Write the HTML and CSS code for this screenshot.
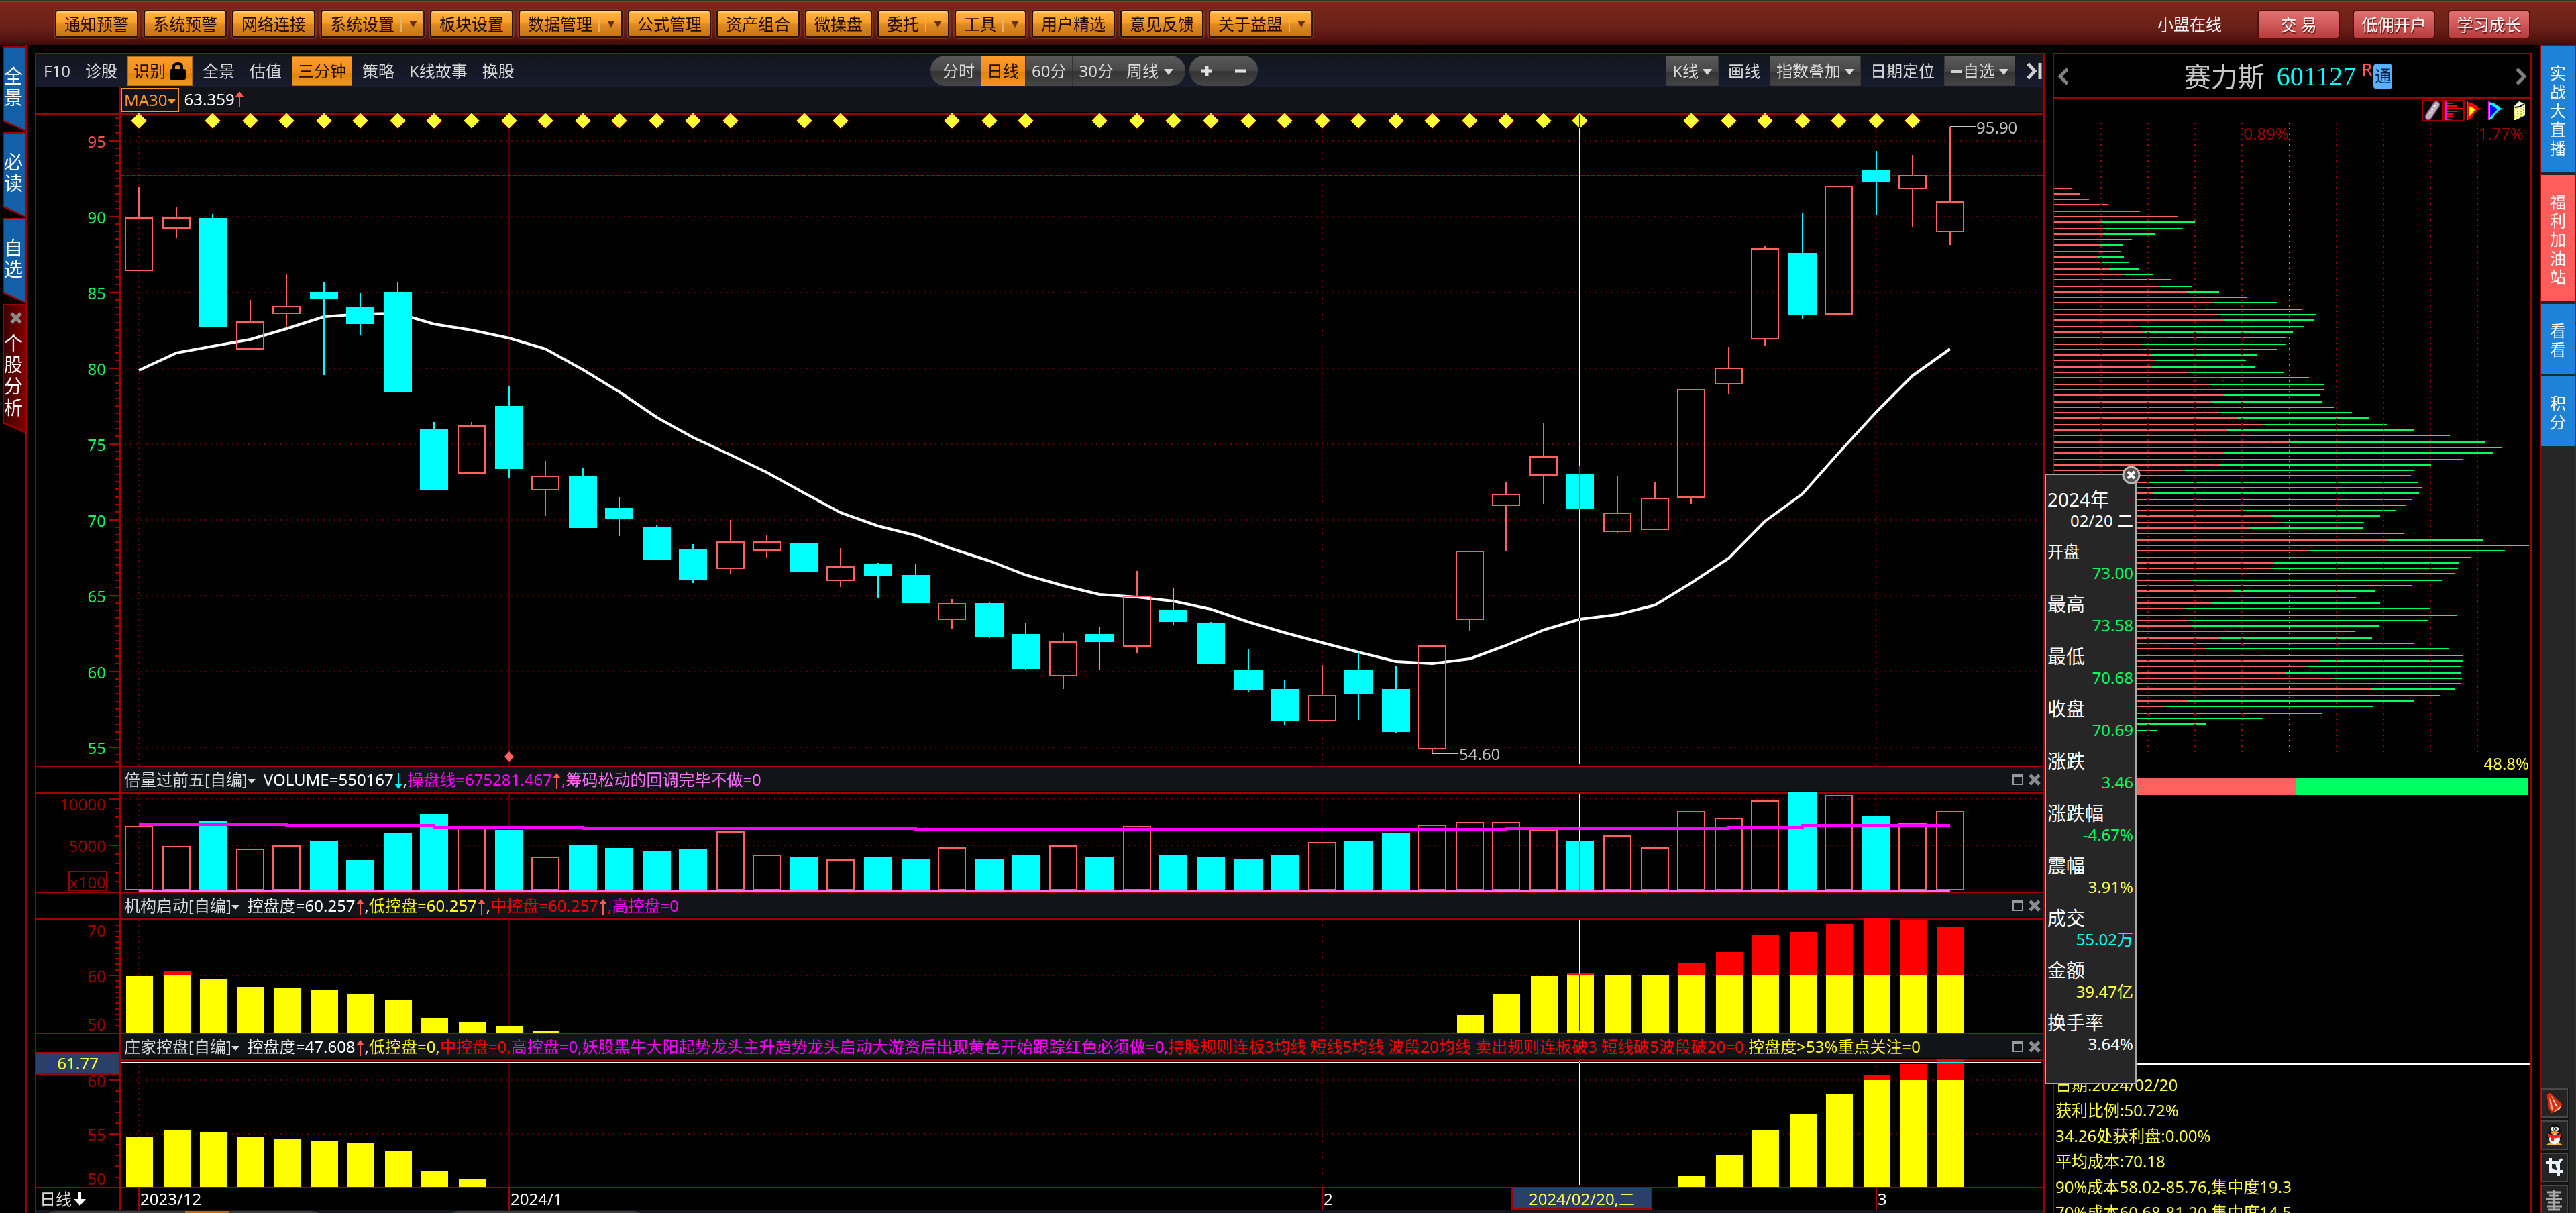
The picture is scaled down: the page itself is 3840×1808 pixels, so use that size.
FILE: index.html
```html
<!DOCTYPE html>
<html lang="zh-CN">
<head>
<meta charset="utf-8">
<title>赛力斯 601127</title>
<link rel="stylesheet" href="styles.css">
</head>
<body>
<svg class="defs" width="0" height="0" aria-hidden="true">
  <symbol id="a-up" viewBox="0 0 14 26"><path d="M7 1L13 9H8V25H6V9H1z"/></symbol>
  <symbol id="a-down" viewBox="0 0 14 26"><path d="M7 25L13 17H8V1H6V17H1z"/></symbol>
  <symbol id="a-close" viewBox="0 0 18 18"><path d="M2 2L16 16M16 2L2 16" stroke="#8c8c8c" stroke-width="5"/></symbol>
</svg>
<header class="topbar">
  <nav class="menu">
    <button class="menu-btn">通知预警</button>
    <button class="menu-btn">系统预警</button>
    <button class="menu-btn">网络连接</button>
    <button class="menu-btn">系统设置<i class="split"></i></button>
    <button class="menu-btn">板块设置</button>
    <button class="menu-btn">数据管理<i class="split"></i></button>
    <button class="menu-btn">公式管理</button>
    <button class="menu-btn">资产组合</button>
    <button class="menu-btn">微操盘</button>
    <button class="menu-btn">委托<i class="split"></i></button>
    <button class="menu-btn">工具<i class="split"></i></button>
    <button class="menu-btn">用户精选</button>
    <button class="menu-btn">意见反馈</button>
    <button class="menu-btn">关于益盟<i class="split"></i></button>
  </nav>
  <div class="account">
    <a class="online" href="#">小盟在线</a>
    <button class="red-btn">交 易</button>
    <button class="red-btn">低佣开户</button>
    <button class="red-btn">学习成长</button>
  </div>
</header>

<div class="workspace">
  <nav class="left-tabs">
    <button class="ltab"><span>全景</span></button>
    <button class="ltab"><span>必读</span></button>
    <button class="ltab"><span>自选</span></button>
    <button class="ltab active">
      <svg class="x"><use href="#a-close"/></svg>
      <span>个股分析</span>
    </button>
  </nav>

  <main class="chart-panel">
    <div class="toolbar">
      <div class="tools">
        <button class="tool">F10</button>
        <button class="tool">诊股</button>
        <button class="tool on">识别<svg class="lock" viewBox="0 0 26 28" width="26" height="28"><path d="M7 11V7q0-4 6-4t6 4v4" fill="none" stroke="#000" stroke-width="4"/><rect x="1" y="11" width="24" height="16" rx="3"/></svg></button>
        <button class="tool">全景</button>
        <button class="tool">估值</button>
        <button class="tool on">三分钟</button>
        <button class="tool">策略</button>
        <button class="tool">K线故事</button>
        <button class="tool">换股</button>
      </div>
      <div class="periods">
        <div class="pill">
          <button class="seg first">分时</button>
          <button class="seg on">日线</button>
          <button class="seg">60分</button>
          <button class="seg">30分</button>
          <button class="seg last">周线<i class="tri"></i></button>
        </div>
        <div class="pill zoom">
          <button class="sign" aria-label="放大"><svg viewBox="0 0 20 20" width="20" height="20"><path d="M2 10H18M10 2V18"/></svg></button>
          <button class="sign" aria-label="缩小"><svg viewBox="0 0 20 20" width="20" height="20"><path d="M2 10H18"/></svg></button>
        </div>
      </div>
      <div class="tools right">
        <button class="drop">K线<i class="tri"></i></button>
        <button class="tool">画线</button>
        <button class="drop">指数叠加<i class="tri"></i></button>
        <button class="tool">日期定位</button>
        <button class="drop"><i class="dash"></i>自选<i class="tri"></i></button>
        <button class="skip" aria-label="收起"><svg viewBox="0 0 24 26" width="24" height="26"><path d="M3 2L13 13L3 24M21 1V25"/></svg></button>
      </div>
    </div>

    <div class="row info-row">
      <div class="axis-cell"></div>
      <div class="strip">
        <button class="ma">MA30<i class="tri"></i></button>
        <span class="w">63.359</span><svg class="arr up"><use href="#a-up"/></svg>
      </div>
    </div>
    <section class="plot price"><svg id="price"></svg></section>

    <div class="row head">
      <div class="axis-cell"></div>
      <div class="strip">
        <button class="name">倍量过前五[自编]<i class="tri"></i></button>
        <p><span class="w">VOLUME=550167</span><svg class="arr cy"><use href="#a-down"/></svg><span class="w">,</span><span class="mg">操盘线=675281.467</span><svg class="arr up"><use href="#a-up"/></svg><span class="mg">,</span><span class="pk">筹码松动的回调完毕不做=0</span></p>
        <div class="win"><button aria-label="最大化"><i class="max"></i></button><button aria-label="关闭"><svg class="x"><use href="#a-close"/></svg></button></div>
      </div>
    </div>
    <section class="plot volume"><svg id="volume"></svg></section>

    <div class="row head">
      <div class="axis-cell"></div>
      <div class="strip">
        <button class="name">机构启动[自编]<i class="tri"></i></button>
        <p><span class="w">控盘度=60.257</span><svg class="arr up"><use href="#a-up"/></svg><span class="w">,</span><span class="ye">低控盘=60.257</span><svg class="arr up"><use href="#a-up"/></svg><span class="ye">,</span><span class="rd">中控盘=60.257</span><svg class="arr up"><use href="#a-up"/></svg><span class="rd">,</span><span class="mg">高控盘=0</span></p>
        <div class="win"><button aria-label="最大化"><i class="max"></i></button><button aria-label="关闭"><svg class="x"><use href="#a-close"/></svg></button></div>
      </div>
    </div>
    <section class="plot inst"><svg id="inst"></svg></section>

    <div class="row head">
      <div class="axis-cell"></div>
      <div class="strip">
        <button class="name">庄家控盘[自编]<i class="tri"></i></button>
        <p><span class="w">控盘度=47.608</span><svg class="arr up"><use href="#a-up"/></svg><span class="w">,</span><span class="ye">低控盘=0,</span><span class="rd">中控盘=0,</span><span class="mg">高控盘=0,妖股黑牛大阳起势龙头主升趋势龙头启动大游资后出现黄色开始跟踪红色必须做=0,</span><span class="rd">持股规则连板3均线 短线5均线 波段20均线 卖出规则连板破3 短线破5波段破20=0,</span><span class="ye">控盘度&gt;53%重点关注=0</span></p>
        <div class="win"><button aria-label="最大化"><i class="max"></i></button><button aria-label="关闭"><svg class="x"><use href="#a-close"/></svg></button></div>
      </div>
    </div>
    <section class="plot banker"><svg id="banker"></svg><output class="cursor-value">61.77</output></section>

    <div class="date-row">
      <button class="cycle">日线<svg viewBox="0 0 20 20" width="20" height="20"><path d="M8 0h4v10h7l-9 10L1 10h7z" fill="#fff"/></svg></button>
      <svg id="dates"></svg>
    </div>
    <div class="bottom-strip"><i class="bpill"><i class="bon"></i></i><i class="bpill two"></i></div>
  </main>

  <aside class="info-panel">
    <div class="title">
      <button class="nav" aria-label="上一只"><svg viewBox="0 0 20 26" width="20" height="26"><path d="M16 2L5 13L16 24"/></svg></button>
      <h1><span class="stock">赛力斯</span><span class="code">601127</span><sup>R</sup><b>通</b></h1>
      <button class="nav" aria-label="下一只"><svg viewBox="0 0 20 26" width="20" height="26"><path d="M4 2L15 13L4 24"/></svg></button>
    </div>
    <div class="icons">
      <button class="boxed" aria-label="画笔"><svg viewBox="0 0 28 28" width="28" height="28"><path d="M20 5L8 23" stroke="#a030a0" stroke-width="11" stroke-linecap="round"/><path d="M20 5L8 23" stroke="#b8b8b8" stroke-width="8" stroke-linecap="round"/><path d="M18 6L8 21" stroke="#fff" stroke-width="2" stroke-dasharray="3 3"/></svg></button>
      <button class="boxed" aria-label="筹码分布"><svg viewBox="0 0 28 28" width="28" height="28"><path d="M2 0V28" stroke="#f0f" stroke-width="2"/><path d="M3 3h10M3 7h16M3 11h24M3 15h15M3 19h9M3 23h9M3 27h6" stroke="#f00" stroke-width="2"/></svg></button>
      <button aria-label="火焰山"><svg viewBox="0 0 28 28" width="28" height="28"><path d="M3 1L10 3L18 8V10L26 11L18 13L12 19L7 26L3 28z" fill="#f00"/><path d="M4 7L9 9L14 12L9 18L4 24z" fill="#ff0"/><path d="M2 0V28" stroke="#f0f" stroke-width="2"/></svg></button>
      <button aria-label="活跃度"><svg viewBox="0 0 28 28" width="28" height="28"><path d="M3 1L10 3L18 8V10L26 11L18 13L12 19L7 26L3 28z" fill="#0ff"/><path d="M4 5L10 8L15 12L9 18L4 24z" fill="#00f"/><path d="M2 0V28" stroke="#f0f" stroke-width="2"/></svg></button>
      <button aria-label="导出"><svg viewBox="0 0 28 28" width="28" height="28"><path d="M7 8L15 0L24 4V21L10 28H7z" fill="#ffffb0"/><path d="M8 8L15 1L23 5L17 11z" fill="#fff"/><path d="M8 9L16 8L23 4" fill="none" stroke="#000" stroke-width="2"/><path d="M8 9V28M13 10V26M18 10V24M22 8V21" stroke="#cc0" stroke-width="2" stroke-dasharray="2 2"/></svg></button>
    </div>
    <div class="chips"><svg id="chips"></svg></div>
    <div class="ratio">48.8%</div>
    <div class="ratio-bar"><i style="width:51.2%"></i></div>
    <div class="spacer"></div>
    <div class="stats">
      <p>日期:2024/02/20</p>
      <p>获利比例:50.72%</p>
      <p>34.26处获利盘:0.00%</p>
      <p>平均成本:70.18</p>
      <p>90%成本58.02-85.76,集中度19.3</p>
      <p>70%成本60.68-81.20,集中度14.5</p>
    </div>

    <div class="popup">
      <button class="close" aria-label="关闭"><svg viewBox="0 0 28 28" width="28" height="28"><circle cx="14" cy="14" r="12" fill="#555" stroke="#bbb" stroke-width="3"/><path d="M9 9L19 19M19 9L9 19" stroke="#fff" stroke-width="4"/></svg></button>
      <div class="day"><span>2024年</span><em>02/20 二</em></div>
      <dl>
        <div><dt class="sm">开盘</dt><dd class="g">73.00</dd></div>
        <div><dt>最高</dt><dd class="g">73.58</dd></div>
        <div><dt>最低</dt><dd class="g">70.68</dd></div>
        <div><dt>收盘</dt><dd class="g">70.69</dd></div>
        <div><dt>涨跌</dt><dd class="g">3.46</dd></div>
        <div><dt>涨跌幅</dt><dd class="g">-4.67%</dd></div>
        <div><dt>震幅</dt><dd class="y">3.91%</dd></div>
        <div><dt>成交</dt><dd class="c">55.02万</dd></div>
        <div><dt>金额</dt><dd class="y">39.47亿</dd></div>
        <div><dt>换手率</dt><dd>3.64%</dd></div>
      </dl>
    </div>
  </aside>

  <nav class="right-tabs">
    <button class="rtab"><span>实战大直播</span></button>
    <button class="rtab hot"><span>福利加油站</span></button>
    <button class="rtab"><span>看看</span></button>
    <button class="rtab"><span>积分</span></button>
    <div class="quick">
      <button aria-label="指针"><svg viewBox="0 0 28 34" width="28" height="34"><path d="M7 1L26 19L22 27L9 33L5 25L2 5z" fill="#d33010" stroke="#501008" stroke-width="1"/><path d="M8 4L14 14L19 24L15 20z" fill="#fff"/><path d="M6 8L10 18L12 30L8 24z" fill="#ffb0a0"/><path d="M12 31L24 21L21 27z" fill="#ffd0c0"/></svg></button>
      <button aria-label="QQ"><svg viewBox="0 0 28 34" width="28" height="34"><path d="M14 1q8 0 8 9l4 11-4 1-2 7H8l-2-7-4-1L6 10q0-9 8-9z" fill="#111"/><ellipse cx="14" cy="23" rx="8" ry="8" fill="#fff"/><circle cx="11" cy="8" r="3" fill="#fff"/><circle cx="17" cy="8" r="3" fill="#fff"/><circle cx="12" cy="8" r="1"/><circle cx="16" cy="8" r="1"/><ellipse cx="14" cy="13" rx="6" ry="2" fill="#fa2"/><path d="M4 14q10 6 20 0v5q-10 5-20 0z" fill="#e22"/><path d="M8 18h5v8H8z" fill="#e22"/><path d="M1 32q5-6 12-1 8-5 14 1z" fill="#fa3"/></svg></button>
      <button aria-label="截图"><svg viewBox="0 0 28 34" width="28" height="34"><path d="M1 10H20V30M8 3V23H27M25 4L10 22" fill="none" stroke="#e8f0ff" stroke-width="4"/><path d="M12 14h4v5h-4z" fill="#222"/></svg></button>
      <button aria-label="更多"><svg viewBox="0 0 28 34" width="28" height="34"><path d="M3 6H23M6 11H21M2 16H25M5 21H22M3 27H25M13 2V33M5 32H22" fill="none" stroke="#aaa" stroke-width="3"/></svg></button>
    </div>
  </nav>
</div>
<script src="charts.js"></script>
</body>
</html>
```
FILE: styles.css
```css
* { box-sizing: border-box; }
:root {
  --line: #a00000;
  --up: #ff6060;
  --down: #00ffff;
  --font: "Noto Sans", "Noto Sans CJK SC", sans-serif;
}
html, body { height: 100%; }
body {
  margin: 0;
  display: flex;
  flex-direction: column;
  overflow: hidden;
  background: #000;
  color: #d8d8d8;
  font: 24px/28px var(--font);
}
button {
  margin: 0;
  padding: 0;
  border: 0;
  background: none;
  color: inherit;
  font: inherit;
  white-space: nowrap;
  cursor: pointer;
}
p, h1, dl, dd { margin: 0; }
svg { display: block; }
.defs { position: absolute; }

/* top bar */
.topbar {
  flex: 0 0 67px;
  display: flex;
  justify-content: space-between;
  padding: 14px 68px 0 82px;
  border-top: 1px solid #333;
  background: linear-gradient(#a83420 0 2px, #7c281a 2px, #6a2018 40px, #54120f 58px, #3c0c0c);
}
.menu { display: flex; gap: 8px; }
.menu-btn {
  height: 41px;
  padding: 0 12px;
  display: flex;
  align-items: center;
  border: 2px solid #2a1206;
  border-radius: 4px;
  background: linear-gradient(#ffd070 0 1px, #ffb040 3px, #f8a028 16px, #e08a20 20px, #c07418);
  box-shadow: 0 0 0 2px #7c3420;
  color: #200800;
}
.split {
  width: 22px;
  height: 22px;
  margin-left: 9px;
  border-left: 2px solid #e8b060;
  position: relative;
  display: block;
}
.split::after {
  content: "";
  position: absolute;
  left: 11px;
  top: 6px;
  border: 6px solid transparent;
  border-top: 10px solid #603010;
  border-bottom: 0;
}
.account { display: flex; gap: 19px; align-items: flex-start; }
.online { line-height: 42px; margin-right: 34px; color: #fff; text-decoration: none; }
.red-btn {
  width: 123px;
  height: 43px;
  border: 2px solid #501010;
  border-radius: 5px;
  background: linear-gradient(#e07070 0, #d05858 20px, #b83c3c);
  color: #fff;
  text-shadow: 1px 2px 1px #601818;
}

.workspace { flex: 1; min-height: 0; display: flex; }

/* left tabs */
.left-tabs {
  flex: 0 0 40px;
  padding: 2px 0 0 4px;
  display: flex;
  flex-direction: column;
  gap: 1px;
  border-right: 2px solid var(--line);
  margin-right: 12px;
}
.ltab {
  height: 127px;
  padding: 28px 2px 0 0;
  display: flex;
  flex-direction: column;
  align-items: center;
  background: var(--line);
  clip-path: polygon(0 0, 100% 0, 100% 100%, 0 calc(100% - 15px));
  position: relative;
  color: #fff;
  font-size: 28px;
  line-height: 32px;
  white-space: normal;
}
.ltab::before {
  content: "";
  position: absolute;
  inset: 2px 0 2px 2px;
  background: #1460a8;
  clip-path: polygon(0 0, 100% 0, 100% 100%, 0 calc(100% - 15px));
}
.ltab span { position: relative; width: 28px; }
.ltab .x { position: relative; left: 4px; margin-bottom: 12px; }
.ltab.active { height: 193px; padding-top: 12px; }
.ltab.active::before { background: linear-gradient(90deg, #400000, #800000); }
.x { width: 18px; height: 18px; }

/* chart panel */
.chart-panel {
  flex: 1;
  min-width: 0;
  margin: 12px 12px 0 0;
  display: flex;
  flex-direction: column;
  border: 2px solid var(--line);
  border-bottom: 0;
}
.toolbar {
  flex: 0 0 48px;
  display: grid;
  grid-template-columns: 1333px 1fr auto;
  padding: 2px 2px 1px 0;
  background: linear-gradient(#14161e, #171b2e);
}
.tools { display: flex; align-items: stretch; }
.tool { padding: 0 11px; }
.on { background: linear-gradient(#ff9c2c, #f08c18 24px, #e08408 25px, #f09820); color: #200c00; }
.tool.on { display: flex; align-items: center; margin: 0 4px; padding: 0 8px; border: 2px solid #a86a20; border-width: 2px 1px; }
.lock { margin-left: 5px; }
.tri {
  display: inline-block;
  margin-left: 8px;
  border: 7px solid transparent;
  border-top: 9px solid currentColor;
  border-bottom: 0;
  vertical-align: 3px;
}
.periods { display: flex; gap: 6px; }
.pill, .drop { background: linear-gradient(#5a5a5a, #484848 22px, #343434 24px, #464646); }
.pill { display: flex; border-radius: 22px; overflow: hidden; }
.seg { padding: 0 9px; border-right: 1px solid #333; }
.seg.first { padding: 0 9px 0 18px; border: 0; }
.seg.last { padding-right: 18px; border: 0; }
.zoom { width: 102px; padding: 0 16px; justify-content: space-between; align-items: center; }
.sign path { stroke: #e0e0e0; stroke-width: 5; }
.sign, .skip { display: flex; align-items: center; }
.tools.right .tool { padding: 0 14px; }
.drop { padding: 0 9px; border: 1px solid #383838; }
.drop .tri { margin-left: 6px; }
.dash { display: inline-block; width: 16px; height: 5px; margin-right: 2px; background: #d0d0d0; vertical-align: 6px; }
.skip { padding-left: 16px; }
.skip path { fill: none; stroke: #d0d0d0; stroke-width: 5; }

.row { flex: 0 0 40px; display: grid; grid-template-columns: 126px 1fr; }
.head { border-top: 2px solid var(--line); }
.axis-cell { border-right: 2px solid var(--line); }
.strip { display: flex; align-items: center; background: #121419; white-space: nowrap; min-width: 0; margin-bottom: 2px; }
.head .strip { padding: 2px 0 0 5px; }
.name { margin-right: 12px; }
.name .tri, .ma .tri { margin-left: 0; border-width: 7px 6px 0; }
.strip p { flex: 1; min-width: 0; }
.win { display: flex; gap: 8px; padding-right: 4px; align-items: center; }
.max { display: block; width: 16px; height: 16px; border: 2px solid #999; border-top-width: 4px; }
.ma { height: 36px; margin: 1px 8px 0 0; padding: 0 3px; border: 2px solid #ff9820; color: #ff9820; }
.arr { display: inline-block; width: 14px; height: 26px; vertical-align: -6px; fill: currentColor; }
.w { color: #fff; }
.up { color: #ff5a50; }
.cy { color: #0ff; }
.mg { color: #f0f; }
.pk { color: #ff70ff; }
.ye { color: #ff0; }
.rd { color: #f00; }

.plot { min-height: 0; border-top: 2px solid var(--line); position: relative; }
.plot svg, .chips svg { width: 100%; height: 100%; overflow: visible; }
.price { flex: 970 1 0; }
.volume { flex: 146 1 0; }
.inst { flex: 168 1 0; }
.banker { flex: 188 1 0; }
.cursor-value {
  position: absolute;
  left: 0;
  top: -13px;
  width: 126px;
  height: 34px;
  border: 2px solid var(--line);
  border-left: 0;
  background: #2a4068;
  color: #ffff40;
  line-height: 30px;
  text-align: center;
}
.date-row {
  flex: 0 0 34px;
  display: grid;
  grid-template-columns: 126px 1fr;
  border-top: 2px solid var(--line);
}
.date-row svg { width: 100%; height: 32px; }
.cycle { display: flex; align-items: center; padding-left: 5px; border-right: 2px solid var(--line); }
.date-row .cycle svg { width: 20px; height: 20px; margin-left: 2px; }
.bottom-strip { flex: 0 0 5px; padding: 2px 0 0 10px; display: flex; gap: 180px; overflow: hidden; background: #15171f; }
.bpill { width: 420px; height: 40px; border-radius: 20px; background: #3c3c3c; }
.bpill.two { width: 300px; }
.bon { display: block; width: 66px; height: 40px; margin-left: 212px; background: #b86c18; }

/* chart marks */
svg text { font: 24px var(--font); dominant-baseline: central; }
.grid { stroke: #600000; stroke-width: 2; stroke-dasharray: 2 6; }
.month { stroke: #500000; stroke-width: 2; }
.axis { stroke: var(--line); stroke-width: 2; }
.last-price { stroke: #a80000; stroke-width: 2; stroke-dasharray: 6 2; }
.hollow { fill: none; stroke: var(--up); stroke-width: 2; }
.wick { stroke: var(--up); stroke-width: 2; }
.wick.down { stroke: var(--down); }
.solid { fill: var(--down); }
.ma-line { fill: none; stroke: #fff; stroke-width: 4; stroke-linejoin: round; }
.vol-line { fill: none; stroke: #f0f; stroke-width: 4; }
.zero-line { stroke: #ff70ff; stroke-width: 2; }
.low { fill: #ff0; }
.high { fill: #f00; }
.signal { fill: #ffff33; stroke: #900; stroke-width: 1; }
.mark { fill: #ff6060; }
.leader { stroke: #c8c8c8; stroke-width: 2; }
.cross { stroke: #fff; stroke-width: 2; mix-blend-mode: difference; }
.chip-win { stroke: #ff6060; stroke-width: 2; }
.chip-loss { stroke: #00ff60; stroke-width: 2; }
.chip-grid { stroke: #a00000; stroke-width: 2; stroke-dasharray: 2 6; }
.chip-grid.mid { stroke: #ff7070; }
.t-red { fill: #ff5050; }
.t-green { fill: #00ff60; }
.t-dark { fill: #a00000; }
.t-gray { fill: #c0c0c0; }
.t-white { fill: #fff; }
.t-yellow { fill: #ffff40; }
.tag { fill: #2a4068; stroke: var(--line); stroke-width: 2; }
.unit { fill: none; stroke: var(--line); stroke-width: 2; }

/* info panel */
.info-panel {
  flex: 0 0 714px;
  margin-top: 12px;
  display: flex;
  flex-direction: column;
  border: 2px solid var(--line);
  border-bottom: 0;
  position: relative;
}
.title { flex: 0 0 66px; display: flex; align-items: center; justify-content: space-between; padding: 2px 4px 0; border-bottom: 2px solid var(--line); }
.title h1 { display: flex; align-items: center; margin-right: 12px; font-size: 24px; font-weight: 400; }
.stock { font-size: 40px; line-height: 48px; margin-right: 18px; color: #c8c8c8; }
.code { font: 40px/48px "Liberation Serif", serif; color: #0ff; margin-right: 8px; }
.title sup { font-size: 26px; line-height: 26px; margin-right: 2px; color: #ff5a5a; align-self: flex-start; }
.title b { width: 28px; height: 38px; border-radius: 5px; background: #58b0ff; color: #002040; font-weight: 400; line-height: 36px; text-align: center; }
.nav path { fill: none; stroke: #808080; stroke-width: 5; }
.icons { flex: 0 0 36px; display: flex; justify-content: flex-end; padding: 2px 2px; }
.icons button { width: 32px; height: 32px; display: flex; align-items: center; justify-content: center; }
.icons .boxed { border: 2px solid var(--line); }
.chips { flex: 938 1 0; min-height: 0; }
.ratio { flex: 0 0 38px; line-height: 34px; text-align: right; padding-right: 2px; color: #ffff40; }
.ratio-bar { flex: 0 0 26px; margin-right: 4px; background: #00ff60; display: flex; }
.ratio-bar i { background: #ff6060; }
.spacer { flex: 400 1 0; }
.stats { flex: 0 0 223px; min-height: 0; padding: 11px 0 0 2px; border-top: 2px solid #fff; line-height: 38px; color: #ffff40; }

.popup {
  position: absolute;
  left: -14px;
  top: 625px;
  width: 137px;
  padding: 18px 3px 44px 2px;
  border: 2px solid #aaa;
  background: #262626;
  color: #fff;
}
.close { position: absolute; right: -8px; top: -14px; }
.day { font-size: 28px; line-height: 36px; margin-bottom: 14px; }
.day em { display: block; font-size: 24px; line-height: 28px; font-style: normal; text-align: right; }
.popup dl { display: flex; flex-direction: column; gap: 14px; }
.popup dt { font-size: 28px; line-height: 36px; }
.popup dt.sm { font-size: 24px; }
.popup dd { text-align: right; }
.g { color: #00ff60; }
.y { color: #ffff40; }
.c { color: #0ff; }

/* right tabs */
.right-tabs {
  flex: 0 0 54px;
  margin-left: 12px;
  display: flex;
  flex-direction: column;
  gap: 4px;
  border: 2px solid var(--line);
  border-bottom: 0;
  background: #262626;
}
.rtab { height: 188px; display: flex; justify-content: center; align-items: center; background: #1e82d9; color: #fff; white-space: normal; }
.rtab.hot { background: #ff5c5c; }
.rtab:nth-child(n+3) { height: 104px; }
.rtab span { width: 24px; padding-top: 4px; }
.quick { flex: 0 0 186px; margin-top: auto; display: flex; flex-direction: column; gap: 4px; overflow: hidden; }
.quick button { flex: 0 0 44px; width: 40px; display: flex; align-items: center; justify-content: center; border: 2px solid #484848; background: #242424; outline: 2px solid #141414; outline-offset: 0; }
```
FILE: charts.js
```js
// Each candle: [open, close, high, low]
const candles = [
  [86.38, 89.94, 91.94, 86.38], [89.20, 89.94, 90.61, 88.56], [89.89, 82.73, 90.17, 82.73],
  [81.23, 83.06, 84.50, 81.23], [83.56, 84.11, 86.18, 82.70], [85.02, 84.58, 85.63, 79.55],
  [84.05, 82.89, 84.94, 82.20], [85.02, 78.38, 85.63, 78.38], [76.01, 71.91, 76.45, 71.91],
  [73.02, 76.23, 76.45, 73.02], [77.50, 73.35, 78.83, 72.72], [71.94, 72.88, 73.88, 70.25],
  [72.91, 69.45, 73.43, 69.45], [70.78, 70.06, 71.47, 68.93], [69.53, 67.32, 69.62, 67.32],
  [68.04, 65.99, 68.37, 65.83], [66.74, 68.57, 69.98, 66.44], [67.96, 68.57, 69.01, 67.49],
  [68.48, 66.52, 68.48, 66.52], [65.94, 66.94, 68.12, 65.55], [67.05, 66.27, 67.16, 64.83],
  [66.35, 64.50, 67.05, 64.50], [63.37, 64.47, 64.75, 62.81], [64.50, 62.29, 64.58, 62.18],
  [62.46, 60.16, 63.17, 60.08], [59.66, 61.97, 62.54, 58.84], [62.45, 61.94, 62.90, 60.05],
  [61.60, 64.99, 66.63, 61.21], [64.06, 63.24, 65.47, 63.07], [63.16, 60.50, 63.24, 60.50],
  [60.05, 58.73, 61.49, 58.64], [58.84, 56.69, 59.43, 56.44], [56.72, 58.44, 60.42, 56.72],
  [60.05, 58.47, 61.27, 56.78], [58.84, 55.99, 60.33, 55.90], [54.86, 61.72, 61.72, 54.60],
  [63.38, 67.93, 67.93, 62.62], [70.89, 71.71, 72.44, 67.95], [72.92, 74.19, 76.34, 71.03],
  [73.00, 70.69, 73.58, 70.68], [69.20, 70.47, 72.89, 69.08], [69.31, 71.45, 72.44, 69.31],
  [71.43, 78.62, 78.62, 71.03], [78.93, 80.03, 81.39, 78.28], [81.87, 87.91, 88.02, 81.47],
  [87.60, 83.50, 90.25, 83.25], [83.53, 92.00, 92.00, 83.53], [93.07, 92.28, 94.31, 90.08],
  [91.77, 92.70, 94.06, 89.26], [88.95, 91.01, 95.90, 88.13]
];
const ma30 = [79.85, 81.01, 81.43, 81.90, 82.59, 83.39, 83.56, 83.61, 82.92, 82.50, 81.98, 81.26, 79.91,
  78.41, 76.75, 75.43, 74.26, 73.13, 71.75, 70.45, 69.56, 68.95, 68.07, 67.29, 66.33, 65.64, 65.05, 64.91,
  64.62, 64.09, 63.27, 62.56, 61.86, 61.27, 60.62, 60.50, 60.84, 61.72, 62.71, 63.41, 63.75, 64.37, 65.84,
  67.47, 69.87, 71.71, 74.39, 77.10, 79.50, 81.25];
const volumes = [7050, 4870, 7560, 4580, 5000, 5510, 3330, 6250, 8430, 6890, 6670, 3720, 4940, 4650, 4330,
  4490, 6510, 3970, 3750, 3430, 3750, 3460, 4740, 3460, 3910, 5000, 3750, 7080, 3910, 3620, 3460, 3910,
  5320, 5510, 6250, 7240, 7530, 7530, 6730, 5502, 6060, 4740, 8690, 7950, 9870, 10770, 10450, 8140, 7370, 8690];
// Volume trend: [first day, level]
const trend = [[0, 7260], [4, 7120], [8, 6970], [12, 6820], [21, 6680], [37, 6820], [43, 6970], [45, 7120]];
const inst = { 0: 59.9, 1: 60.9, 2: 59.4, 3: 57.9, 4: 57.7, 5: 57.5, 6: 56.7, 7: 55.5, 8: 52.4, 9: 51.7,
  10: 51, 11: 50, 36: 52.9, 37: 56.7, 38: 59.9, 39: 60.4, 40: 60.1, 41: 60.1, 42: 62.3, 43: 64.2, 44: 67.4,
  45: 67.8, 46: 69.3, 47: 70.3, 48: 70, 49: 68.8 };
const banker = { 0: 54.7, 1: 55.4, 2: 55.2, 3: 54.7, 4: 54.6, 5: 54.4, 6: 54.2, 7: 53.4, 8: 51.6, 9: 50.8,
  42: 51.1, 43: 53, 44: 55.4, 45: 56.8, 46: 58.7, 47: 60.5, 48: 61.5, 49: 61.9 };
const noSignal = [1, 17, 20, 21, 25, 40, 41, 49];
const months = [[0, '2023/12'], [10, '2024/1'], [32, '2'], [47, '3']];
const CURSOR = 39;
// Chip distribution, top price first: [profit length, total length]
const chips = [[26, 26], [38, 38], [52, 52], [80, 80], [128, 128], [184, 184], [71, 210], [74, 192], [74, 150],
  [70, 116], [68, 102], [66, 100], [66, 104], [72, 112], [82, 126], [102, 148], [122, 174], [156, 206],
  [198, 246], [211, 288], [238, 332], [226, 370], [244, 390], [254, 388], [128, 372], [134, 356], [168, 346],
  [130, 346], [134, 332], [146, 302], [150, 286], [146, 300], [202, 342], [250, 380], [232, 402], [240, 402],
  [254, 396], [236, 400], [275, 418], [248, 444], [274, 470], [312, 496], [258, 536], [286, 590], [352, 642],
  [316, 668], [254, 654], [250, 610], [246, 562], [192, 536], [157, 532], [141, 542], [138, 548], [148, 544],
  [144, 534], [212, 524], [278, 510], [324, 486], [339, 462], [290, 460], [376, 522], [498, 640], [356, 708],
  [380, 672], [352, 622], [328, 604], [324, 602], [288, 598], [204, 578], [230, 534], [266, 478], [258, 450],
  [236, 486], [196, 560], [192, 600], [203, 558], [206, 484], [256, 448], [248, 474], [166, 536], [226, 588],
  [308, 610], [396, 610], [376, 606], [344, 606], [418, 608], [482, 606], [472, 598], [222, 576], [198, 536],
  [166, 476], [134, 400], [100, 312], [80, 226], [60, 154]];

const AXIS = 126;
const r = Math.round;

function canvas(id) {
  const svg = document.getElementById(id);
  svg.innerHTML = '';
  const box = svg.getBoundingClientRect();
  const add = (tag, attrs, text) => {
    const el = document.createElementNS('http://www.w3.org/2000/svg', tag);
    for (const k in attrs) el.setAttribute(k, attrs[k]);
    if (text !== undefined) el.textContent = text;
    svg.appendChild(el);
    return el;
  };
  const c = { w: box.width, h: box.height, add };
  c.line = (x1, y1, x2, y2, cls) => add('line', { x1, y1, x2, y2, class: cls, 'shape-rendering': 'crispEdges' });
  c.rect = (x, y, width, height, cls) => add('rect', { x, y, width: Math.max(width, 0), height: Math.max(height, 0), class: cls, 'shape-rendering': 'crispEdges' });
  c.text = (x, y, s, cls, anchor) => add('text', { x, y, class: cls, 'text-anchor': anchor || 'start' }, s);
  c.x = i => AXIS + 27 + 2 * r(i * (c.w - AXIS - 166) / 98);
  return c;
}

function frame(c, y, minor, major, from, to) {
  for (let v = from; v <= to + 1e-6; v += minor) {
    const isMajor = Math.abs(v / major - r(v / major)) < 1e-6;
    c.line(AXIS - (isMajor ? 18 : 9), y(v), AXIS - 2, y(v), 'axis');
    if (isMajor) c.line(AXIS + 6, y(v), c.w, y(v), 'grid');
  }
  c.line(AXIS - 1, 0, AXIS - 1, c.h, 'axis');
  months.forEach(([i], n) => c.line(c.x(i), 0, c.x(i), c.h, n === 1 ? 'month' : 'grid'));
}

function drawPrice() {
  const c = canvas('price');
  const y = p => r((38.5 + (95 - p) * 22.6) * c.h / 970);
  frame(c, y, 0.5, 5, 54, 96.5);
  for (let p = 55; p <= 95; p += 5) c.text(104, y(p), p, p === 95 ? 't-red' : 't-green', 'end');
  c.line(AXIS, y(92.69), c.w, y(92.69), 'last-price');
  c.add('polyline', { class: 'ma-line', points: ma30.map((v, i) => c.x(i) + ',' + y(v)).join(' ') });
  candles.forEach(([o, cl, hi, lo], i) => {
    const x = c.x(i), top = y(Math.max(o, cl)), bot = y(Math.min(o, cl));
    if (cl > o) {
      c.line(x, y(hi), x, top, 'wick');
      c.line(x, bot, x, y(lo), 'wick');
      c.rect(x - 20, top + 1, 40, bot - top - 2, 'hollow');
    } else {
      c.line(x, y(hi), x, y(lo), 'wick down');
      c.rect(x - 21, top, 42, bot - top, 'solid');
    }
    if (!noSignal.includes(i)) c.add('path', { class: 'signal', d: `M${x} -3L${x + 12} 9L${x} 21L${x - 12} 9z` });
  });
  const mx = c.x(10), my = c.h - 13;
  c.add('path', { class: 'mark', d: `M${mx} ${my - 8}L${mx + 7} ${my}L${mx} ${my + 8}L${mx - 7} ${my}z` });
  c.line(c.x(49), y(95.9), c.x(49) + 38, y(95.9), 'leader');
  c.text(c.x(49) + 39, y(95.9), '95.90', 't-gray');
  c.line(c.x(35), y(54.6), c.x(35) + 38, y(54.6), 'leader');
  c.text(c.x(35) + 40, y(54.6), '54.60', 't-gray');
  c.line(c.x(CURSOR), 0, c.x(CURSOR), c.h - 2, 'cross');
}

function drawVolume() {
  const c = canvas('volume');
  const y = v => r((145 - v * 0.0137) * c.h / 146);
  frame(c, y, 1000, 5000, 1000, 10000);
  c.text(104, y(9500), '10000', 't-dark', 'end');
  c.text(104, y(5000), '5000', 't-dark', 'end');
  c.rect(49, c.h - 30, 56, 28, 'unit');
  c.text(104, c.h - 15, 'x100', 't-dark', 'end');
  volumes.forEach((v, i) => {
    const x = c.x(i), top = Math.max(y(v), -2), b = c.h - 2;
    if (candles[i][1] > candles[i][0]) c.rect(x - 20, top + 1, 40, b - top - 2, 'hollow');
    else c.rect(x - 21, top, 42, b - top, 'solid');
  });
  let d = `M${c.x(0)} ${y(trend[0][1])}`;
  trend.forEach(([i, v]) => { d += `H${c.x(i)}V${y(v)}`; });
  c.add('path', { class: 'vol-line', d: d + `H${c.x(49)}`, 'shape-rendering': 'crispEdges' });
  c.line(c.x(0), c.h - 1, c.x(49), c.h - 1, 'zero-line');
  c.line(c.x(CURSOR), 0, c.x(CURSOR), c.h - 2, 'cross');
}

function drawBars(id, data, y60, unit, refH, labels, majorStep) {
  const c = canvas(id);
  const y = v => r((y60 + (60 - v) * unit) * c.h / refH);
  frame(c, y, 1, majorStep, 51, id === 'inst' ? 69 : 61);
  labels.forEach(([v, at]) => c.text(104, at * c.h / refH, v, 't-dark', 'end'));
  for (const k in data) {
    const x = c.x(+k) - 19, v = data[k];
    const top = y(Math.min(v, 60));
    c.rect(x, top, 40, c.h - top, 'low');
    if (v > 60) c.rect(x, Math.max(y(v), -2), 40, top - Math.max(y(v), -2), 'high');
  }
  c.line(c.x(CURSOR), 0, c.x(CURSOR), c.h - 2, 'cross');
  if (id === 'banker') c.line(AXIS, 3, c.w - 3, 3, 'cross');
}

function drawDates() {
  const c = canvas('dates');
  const x = i => 27 + 2 * r(i * (c.w - 166) / 98);
  months.forEach(([i, s]) => {
    c.line(x(i), 0, x(i), 32, 'axis');
    c.text(x(i) + 2, 15, s, 't-white');
  });
  c.rect(x(CURSOR) - 101, -1, 208, 32, 'tag');
  c.text(x(CURSOR) + 3, 15, '2024/02/20,二', 't-yellow', 'middle');
}

function drawChips() {
  const c = canvas('chips');
  const k = c.w / 710;
  chips.forEach(([win, all], i) => {
    const y = r((97 + i * 8.596) / 2 * c.h / 938) * 2;
    if (all > win) c.line(win * k, y, all * k, y, 'chip-loss');
    c.line(0, y, win * k, y, 'chip-win');
  });
  for (let i = 1; i < 10; i++) c.line(r(i * 70.1 * k), 0, r(i * 70.1 * k), c.h, 'chip-grid' + (i === 5 ? ' mid' : ''));
  c.text(350 * k, 15, '0.89%', 't-dark', 'end');
  c.text(700 * k, 15, '1.77%', 't-dark', 'end');
}

function drawAll() {
  drawPrice();
  drawVolume();
  drawBars('inst', inst, 83, 8.28, 168, [[70, 15], [60, 83], [50, 155]], 10);
  drawBars('banker', banker, 29, 16.06, 188, [[60, 29], [55, 109], [50, 175]], 5);
  drawDates();
  drawChips();
}
drawAll();
window.addEventListener('resize', drawAll);
```
